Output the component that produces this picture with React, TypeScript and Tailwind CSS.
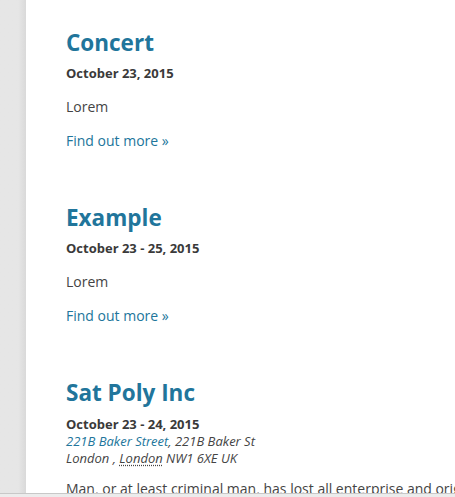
const events = [
  { title: 'Concert', date: 'October 23, 2015' },
  { title: 'Example', date: 'October 23 - 25, 2015' },
]

const font = { fontFamily: '"Open Sans", "Liberation Sans", sans-serif' }

export default function App() {
  return (
    <div className="flex h-[497px] flex-col overflow-hidden bg-[#e6e6e6]" style={font}>
      <div className="flex min-h-0 flex-1">
        <div className="w-[26px] shrink-0 bg-gradient-to-r from-[#e6e6e6] from-70% to-[#d9d9d9]" />
        <main className="min-w-0 flex-1 overflow-hidden bg-white pl-[40px] pt-[28px] text-[#444]">
          {events.map((event) => (
            <article key={event.title} className="mb-[50px]">
              <h2 className="text-[22.5px] font-bold leading-[30px] text-[#21759b]">{event.title}</h2>
              <p className="mt-[6px] text-[13px] font-bold leading-[18px] text-[#3a3a3a]">{event.date}</p>
              <p className="mt-[13px] text-[14px] leading-[24px]">Lorem</p>
              <p className="mt-[10px] text-[14px] leading-[24px]">
                <a href="#" className="text-[#21759b]">Find out more »</a>
              </p>
            </article>
          ))}

          <article>
            <h2 className="text-[22.5px] font-bold leading-[30px] text-[#21759b]">Sat Poly Inc</h2>
            <p className="mt-[7px] text-[13px] font-bold leading-[18px] text-[#3a3a3a]">October 23 - 24, 2015</p>
            <address className="text-[13px] italic leading-[17px]">
              <a href="#" className="text-[#21759b]">221B Baker Street</a>, 221B Baker St
              <br />
              London , <abbr className="underline decoration-dotted underline-offset-2" title="London">London</abbr> NW1 6XE UK
            </address>
            <p className="mt-[10px] whitespace-nowrap text-[14px] leading-[24px]">
              Man, or at least criminal man, has lost all enterprise and originality.
            </p>
          </article>
        </main>
      </div>
      <div className="h-[4px] shrink-0 border-t border-[#c8c8c8] bg-[#ececec]" />
    </div>
  )
}
